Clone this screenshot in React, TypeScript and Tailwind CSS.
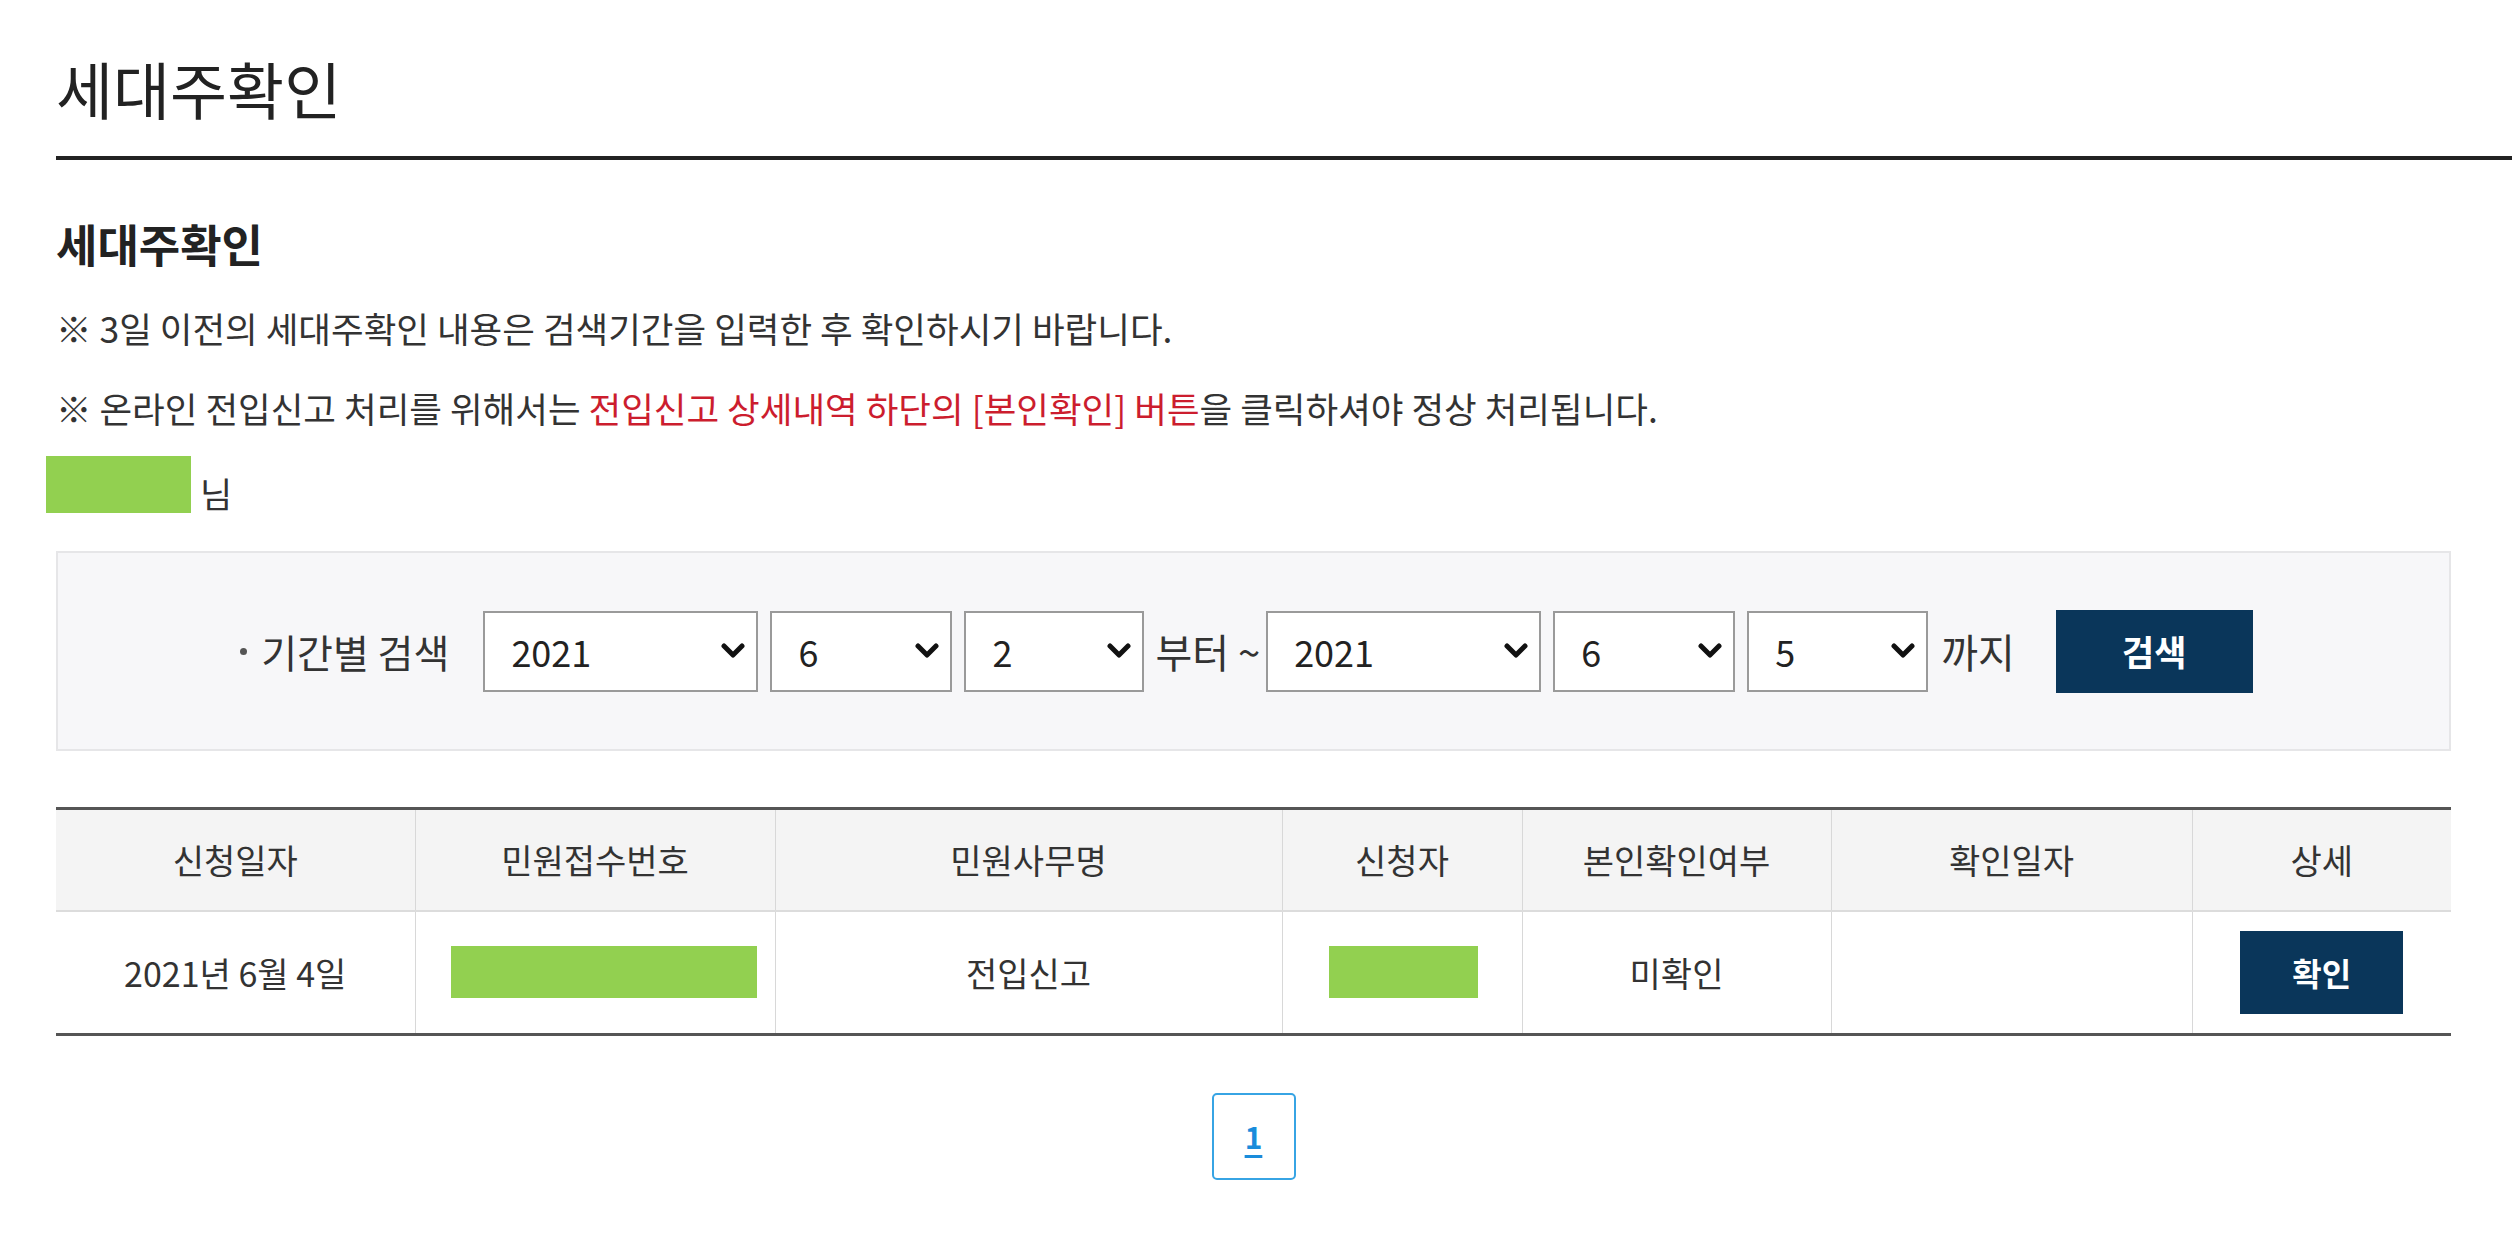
import React from "react";

const FONT = "font-['Noto_Sans_CJK_KR','Noto_Sans',sans-serif]";

function Chevron() {
  return (
    <svg width="26" height="16" viewBox="0 0 26 16" className="pointer-events-none absolute right-[12px] top-1/2 -translate-y-1/2">
      <path d="M4 3 L13 12 L22 3" fill="none" stroke="#111" strokeWidth="5" strokeLinecap="round" strokeLinejoin="round" />
    </svg>
  );
}

function DateSelect({ value, options, width }: { value: string; options: string[]; width: string }) {
  return (
    <div className={`relative h-[81px] ${width}`}>
      <select
        defaultValue={value}
        className="h-full w-full appearance-none border-2 border-[#9a9a9a] bg-white pl-[26px] text-[36px] text-[#222] outline-none"
      >
        {options.map((o) => (
          <option key={o} value={o}>
            {o}
          </option>
        ))}
      </select>
      <Chevron />
    </div>
  );
}

const years = ["2019", "2020", "2021"];
const months = Array.from({ length: 12 }, (_, i) => String(i + 1));
const days = Array.from({ length: 31 }, (_, i) => String(i + 1));

const cols = [
  { label: "신청일자", w: "w-[359px]" },
  { label: "민원접수번호", w: "w-[360px]" },
  { label: "민원사무명", w: "w-[507px]" },
  { label: "신청자", w: "w-[240px]" },
  { label: "본인확인여부", w: "w-[309px]" },
  { label: "확인일자", w: "w-[361px]" },
  { label: "상세", w: "w-[259px]" },
];

export default function App() {
  return (
    <div className={`min-h-screen w-full bg-white text-[#333] ${FONT}`}>
      {/* page heading */}
      <div className="pl-[56px]">
        <h1 className="pt-[56px] text-[62px] leading-[64px] font-normal text-[#222]">세대주확인</h1>
        <div className="mt-[36px] h-[4px] bg-[#222]" />
      </div>

      <div className="pl-[56px] pr-[61px]">
        <h2 className="mt-[60px] text-[45px] leading-[48px] font-semibold text-[#222]">세대주확인</h2>
        <p className="mt-[40px] text-[35.5px] leading-[40px]">
          ※ 3일 이전의 세대주확인 내용은 검색기간을 입력한 후 확인하시기 바랍니다.
        </p>
        <p className="mt-[40px] text-[35.5px] leading-[40px]">
          ※ 온라인 전입신고 처리를 위해서는{" "}
          <span className="text-[#cc1d2e]">전입신고 상세내역 하단의 [본인확인] 버튼</span>을 클릭하셔야 정상 처리됩니다.
        </p>

        <div className="-ml-[10px] mt-[28px] flex h-[57px] items-end gap-[9px]">
          <div className="h-[57px] w-[145px] bg-[#92d050]" />
          <span className="text-[35px] leading-[40px]">님</span>
        </div>

        {/* search */}
        <div className="mt-[38px] flex h-[200px] items-center justify-center border-2 border-[#e6e6e8] bg-[#f7f7f9] pr-[14px]">
          <span className="mr-[34px] flex items-center text-[39px] text-[#333]">
            <span className="mr-[14px] inline-block h-[7px] w-[7px] rounded-full bg-[#555]" />
            기간별 검색
          </span>
          <div className="flex items-center gap-[12px]">
            <DateSelect value="2021" options={years} width="w-[275px]" />
            <DateSelect value="6" options={months} width="w-[182px]" />
            <DateSelect value="2" options={days} width="w-[180px]" />
          </div>
          <span className="ml-[11px] mr-[6px] text-[40px]">부터 ~</span>
          <div className="flex items-center gap-[12px]">
            <DateSelect value="2021" options={years} width="w-[275px]" />
            <DateSelect value="6" options={months} width="w-[182px]" />
            <DateSelect value="5" options={days} width="w-[181px]" />
          </div>
          <span className="ml-[13px] text-[40px]">까지</span>
          <button className="ml-[41px] h-[83px] w-[197px] bg-[#0a365a] text-[35px] font-bold text-white">검색</button>
        </div>

        {/* results */}
        <table className="mt-[56px] w-full table-fixed border-collapse border-t-[3px] border-b-[3px] border-[#555]">
          <thead>
            <tr className="h-[102px] border-b-2 border-[#dcdcdc] bg-[#f4f4f4]">
              {cols.map((c, i) => (
                <th
                  key={c.label}
                  className={`${c.w} text-center text-[34px] font-normal text-[#333] ${i < cols.length - 1 ? "border-r border-[#d8d8d8]" : ""}`}
                >
                  {c.label}
                </th>
              ))}
            </tr>
          </thead>
          <tbody>
            <tr className="h-[124px] text-center text-[34px]">
              <td className="border-r border-[#d8d8d8]">2021년 6월 4일</td>
              <td className="border-r border-[#d8d8d8]">
                <div className="ml-[35px] h-[52px] w-[306px] bg-[#92d050]" />
              </td>
              <td className="border-r border-[#d8d8d8]">전입신고</td>
              <td className="border-r border-[#d8d8d8]">
                <div className="ml-[46px] h-[52px] w-[149px] bg-[#92d050]" />
              </td>
              <td className="border-r border-[#d8d8d8]">미확인</td>
              <td className="border-r border-[#d8d8d8]"></td>
              <td>
                <button className="h-[83px] w-[163px] bg-[#0a365a] text-[32px] font-bold text-white">확인</button>
              </td>
            </tr>
          </tbody>
        </table>

        {/* pagination */}
        <div className="mt-[57px] flex justify-center pb-[70px]">
          <a
            href="#"
            className="flex h-[87px] w-[84px] items-center justify-center rounded-[5px] border-2 border-[#37a4e4] text-[30px] font-bold text-[#1a8cdb] underline underline-offset-[6px]"
          >
            1
          </a>
        </div>
      </div>
    </div>
  );
}
